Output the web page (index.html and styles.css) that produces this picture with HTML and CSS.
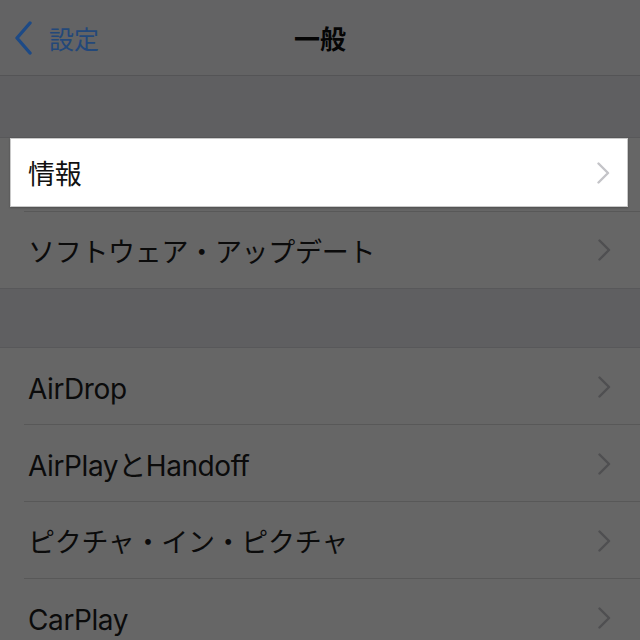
FILE: index.html
```html
<!DOCTYPE html>
<html lang="ja">
<head>
<meta charset="utf-8">
<link rel="stylesheet" href="styles.css">
</head>
<body>
<div class="screen">
  <header class="nav">
    <div class="back">
      <svg class="back-chevron" width="20" height="34" viewBox="0 0 20 34"><path d="M16 2 L3 17 L16 32" fill="none" stroke="#1d4a86" stroke-width="3.4" stroke-linecap="round" stroke-linejoin="round"/></svg>
      <span class="back-label">設定</span>
    </div>
    <div class="title">一般</div>
  </header>
  <div class="gap gap-first"></div>
  <section class="group">
    <div class="row row-highlight">
      <div class="spot">
        <span class="label">情報</span>
        <svg class="chev" width="13" height="22" viewBox="0 0 13 22"><path d="M1.5 1.5 L11 11 L1.5 20.5" fill="none" stroke="#c4c4c8" stroke-width="2.4" stroke-linecap="round" stroke-linejoin="round"/></svg>
      </div>
    </div>
    <div class="row row-second">
      <span class="label">ソフトウェア・アップデート</span>
      <svg class="chev" width="13" height="22" viewBox="0 0 13 22"><path d="M1.5 1.5 L11 11 L1.5 20.5" fill="none" stroke="#4f4f51" stroke-width="2.4" stroke-linecap="round" stroke-linejoin="round"/></svg>
    </div>
  </section>
  <div class="gap"></div>
  <section class="group">
    <div class="row">
      <span class="label latin">AirDrop</span>
      <svg class="chev" width="13" height="22" viewBox="0 0 13 22"><path d="M1.5 1.5 L11 11 L1.5 20.5" fill="none" stroke="#4f4f51" stroke-width="2.4" stroke-linecap="round" stroke-linejoin="round"/></svg>
    </div>
    <div class="row">
      <span class="label latin">AirPlayとHandoff</span>
      <svg class="chev" width="13" height="22" viewBox="0 0 13 22"><path d="M1.5 1.5 L11 11 L1.5 20.5" fill="none" stroke="#4f4f51" stroke-width="2.4" stroke-linecap="round" stroke-linejoin="round"/></svg>
    </div>
    <div class="row">
      <span class="label">ピクチャ・イン・ピクチャ</span>
      <svg class="chev" width="13" height="22" viewBox="0 0 13 22"><path d="M1.5 1.5 L11 11 L1.5 20.5" fill="none" stroke="#4f4f51" stroke-width="2.4" stroke-linecap="round" stroke-linejoin="round"/></svg>
    </div>
    <div class="row">
      <span class="label latin">CarPlay</span>
      <svg class="chev" width="13" height="22" viewBox="0 0 13 22"><path d="M1.5 1.5 L11 11 L1.5 20.5" fill="none" stroke="#4f4f51" stroke-width="2.4" stroke-linecap="round" stroke-linejoin="round"/></svg>
    </div>
  </section>
</div>
</body>
</html>
```
FILE: styles.css
```css
* { box-sizing: border-box; }
html, body {
  margin: 0;
  padding: 0;
  background: #5f5f61;
}
body {
  font-family: "Inter", "Noto Sans CJK JP", "Noto Sans", sans-serif;
  color: #0b0b0b;
  width: 640px;
  height: 640px;
  overflow: hidden;
}
.screen {
  display: flex;
  flex-direction: column;
}
.nav {
  height: 76px;
  background: #636364;
  border-bottom: 1px solid #545456;
  display: flex;
  align-items: center;
  justify-content: center;
  position: relative;
}
.back {
  position: absolute;
  left: 14px;
  top: 21px;
  display: flex;
  align-items: center;
  gap: 15px;
}
.back-chevron { display: block; }
.back-label {
  font-family: "Noto Sans CJK JP", sans-serif;
  color: #23487a;
  font-size: 25px;
  line-height: 34px;
}
.title {
  font-family: "Noto Sans CJK JP", sans-serif;
  font-size: 26px;
  font-weight: 700;
  color: #050505;
  line-height: 1;
}
.gap {
  height: 58px;
}
.gap-first { height: 61px; }
.group {
  background: #666666;
  border-top: 1px solid #58585a;
  border-bottom: 1px solid #58585a;
}
.row {
  height: 77px;
  display: flex;
  align-items: center;
  justify-content: space-between;
  padding: 0 29px 0 28px;
  position: relative;
}
.row + .row::before {
  content: "";
  position: absolute;
  left: 24px;
  right: 0;
  top: -1px;
  height: 1px;
  background: #585858;
}
.label {
  font-size: 27px;
  font-weight: 400;
  line-height: 1;
  letter-spacing: -0.3px;
  margin-top: 4px;
}
.label.latin {
  font-size: 28px;
  letter-spacing: -0.4px;
}
.chev { display: block; }
.row-second { height: 76px; }
.row-highlight {
  padding: 0;
  height: 74px;
  align-items: flex-start;
}
.spot {
  margin: 0 12px 0 10px;
  height: 69px;
  flex: 1;
  background: #ffffff;
  border: 1px solid #c9c9c9;
  display: flex;
  align-items: center;
  justify-content: space-between;
  padding: 0 17px 0 17px;
  box-shadow: 0 1px 2px rgba(0,0,0,0.25);
}
.spot .label { color: #111; }
```
